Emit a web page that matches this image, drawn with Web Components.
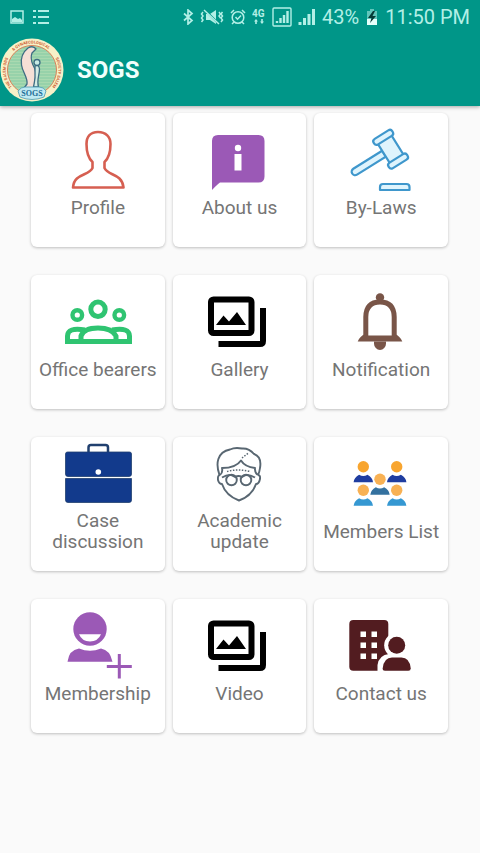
<!DOCTYPE html>
<html lang="en">
<head>
<meta charset="utf-8">
<meta name="viewport" content="width=device-width, initial-scale=1">
<title>SOGS</title>
<style>
  html { min-height: 100%; background: #fafafa; }
  body { margin: 0; font-family: Roboto, "Noto Sans", sans-serif; color: #757575; }
</style>
</head>
<body>
<sogs-app></sogs-app>

<template id="status-bar">
  <style>
    :host { display: flex; justify-content: space-between; align-items: center; height: 34px; padding: 0 10px; color: #b2efe6; font-size: 20px; line-height: 34px; }
    div { display: flex; align-items: center; gap: 6px; }
    .left { gap: 9px; }
    svg { display: block; fill: none; stroke: currentColor; stroke-width: 2; }
    .f { fill: currentColor; stroke: none; }
  </style>
  <div class="left">
    <svg width="14" height="14" viewBox="0 0 14 14"><rect x="1" y="1" width="12" height="12" stroke-width="1.5"/><path class="f" d="M2 12V9l3-2 3 2 2-1 2 2v2z"/></svg>
    <svg width="16" height="16" viewBox="0 0 16 16"><path d="M0 2h3M0 8h3M0 14h3M5 2h11M5 8h11M5 14h11"/></svg>
  </div>
  <div>
    <svg width="12" height="16" viewBox="0 0 12 16"><path stroke-width="1.7" d="M2 4.500l8 7-4 3.500V1l4 3.500-8 7"/></svg>
    <svg width="24" height="16" viewBox="0 0 24 16"><path class="f" d="M6 5h4l6-4v14l-6-4H6z"/><path stroke="#009688" d="M5 1l14 14"/><path stroke-width="1.500" d="M4 1l15 14M3 3L1.500 5 3 7 1.500 9 3 11l-1.500 2M19 3l1.500 2L19 7l1.500 2M22.500 3L21 5l1.500 2L21 9l1.500 2-1.500 2"/></svg>
    <svg width="16" height="16" viewBox="0 0 16 16"><circle cx="8" cy="8.500" r="5.800" stroke-width="1.500"/><path stroke-width="1.500" d="M5.500 8l2 2.200L11 6.500M1 4l3-3M15 4l-3-3M4 13l-2 2M12 13l2 2"/></svg>
    <svg width="14" height="16" viewBox="0 0 14 16"><text class="f" x="0" y="8" font-size="10" font-weight="700">4G</text><path class="f" d="M2 12.500L4 10l2 2.500H4.800V15H3.200v-2.500zM8 12.500h1.200V10h1.600v2.500H12L10 15z"/></svg>
    <svg width="20" height="20" viewBox="0 0 20 20"><rect x="1" y="1" width="18" height="18" rx="1" stroke-width="1.400"/><path stroke-width="2.400" d="M5 16v-2M8.500 16v-5M12 16V8M15.500 16V4"/></svg>
    <svg width="18" height="16" viewBox="0 0 18 16"><path stroke-width="3" d="M2 16v-3M6.500 16v-7M11 16V5M15.500 16V0"/></svg>
    <span>43%</span>
    <svg width="14" height="16" viewBox="0 0 14 16"><path class="f" fill-opacity=".55" d="M5 0h4v2h3v14H2V2h3z"/><path class="f" style="fill:#e4fffb" d="M2 10h10v6H2z"/><path style="fill:#063b36;stroke:none" d="M8 2L3 9h3.500L5 14l6-7H7.500L10 2z"/></svg>
    <span>11:50 PM</span>
  </div>
</template>

<template id="sogs-logo">
  <style>
    :host { display: block; width: 64px; height: 64px; }
    svg { display: block; }
  </style>
  <svg width="64" height="64" viewBox="0 0 64 64" role="img" aria-label="SOGS emblem">
    <defs>
      <path id="ring-left" d="M12 49A26.500 26.500 0 0 1 8.500 20"/>
      <path id="ring-top" d="M13.500 13A26.500 26.500 0 0 1 50.500 13"/>
      <path id="ring-right" d="M55.500 20A26.500 26.500 0 0 1 52 49"/>
      <pattern id="lines" width="3" height="3" patternUnits="userSpaceOnUse"><rect width="3" height="3" fill="#a9d9b0"/><path d="M0 1h3" stroke="#86cba4" stroke-width="1"/></pattern>
    </defs>
    <circle cx="32" cy="32" r="31.500" fill="#f6f1c8"/>
    <circle cx="32" cy="32" r="24.500" fill="url(#lines)" stroke="#d9825a" stroke-width="1"/>
    <g font-size="4" font-weight="700" fill="#cf5a32">
      <text><textPath href="#ring-left">THE SALEM OBS</textPath></text>
      <text><textPath href="#ring-top">&amp; GYNAECOLOGICAL</textPath></text>
      <text><textPath href="#ring-right">SOCIETY SALEM</textPath></text>
    </g>
    <g stroke="#3d6c82" stroke-width="1.300" stroke-linejoin="round">
      <path fill="#f6dfd6" d="M36 11q-3-4-8-1c-5 4-7.500 10-6.500 17 1 7 6.500 13 5.500 19l-3 4h12q-2-3-1-8c2-6 1-10-2-15q-3-7-1-12 3-3 4-4z"/>
      <path fill="#d6ece4" d="M35 28q4-2 4.500 3c0 6-3 11-1 18h-5q1-5 1.500-9z"/>
      <circle cx="37" cy="24.500" r="3" fill="#c9ebe4"/>
    </g>
    <path d="M18 53q3-4 7-4h14q5 0 7 4l-2 6q-12 5-24 0z" fill="#bfe9f2" stroke="#4a9bb0" stroke-width=".8"/>
    <text x="32" y="58" text-anchor="middle" font-size="8" font-weight="700" font-family="Liberation Serif, serif" fill="#1b6c96">SOGS</text>
  </svg>
</template>

<template id="app-bar">
  <style>
    :host { display: flex; align-items: center; gap: 13px; min-height: 72px; color: #f0fffc; }
    h1 { margin: 0; font-size: 24px; line-height: 32px; font-weight: 700; }
  </style>
  <sogs-logo></sogs-logo>
  <h1><slot></slot></h1>
</template>

<template id="menu-tile">
  <style>
    :host { display: block; }
    button { display: flex; flex-direction: column; align-items: center; box-sizing: border-box; width: 100%; min-height: 134px; margin: 0; padding: 0 4px 19px; border: 0; border-radius: 6px; background: #fff; box-shadow: 0 1px 3px rgba(0,0,0,.24); color: inherit; font: inherit; font-size: 19px; line-height: 21px; cursor: pointer; }
    .icon { display: block; width: 100px; height: 73px; }
    .label { display: flex; align-items: center; justify-content: center; min-height: 42px; text-align: center; }
  </style>
  <button type="button"><span class="icon"></span><span class="label"><span><slot></slot></span></span></button>
</template>

<template id="sogs-app">
  <style>
    :host { display: block; }
    header { position: relative; background: #009688; box-shadow: 0 1px 4px rgba(0,0,0,.35); }
    main { display: grid; grid-template-columns: repeat(3, minmax(0, 1fr)); gap: 28px 8px; padding: 7px 32px 32px 31px; }
  </style>
  <header><status-bar></status-bar><app-bar>SOGS</app-bar></header>
  <main>
    <menu-tile icon="profile">Profile</menu-tile>
    <menu-tile icon="about">About us</menu-tile>
    <menu-tile icon="laws">By-Laws</menu-tile>
    <menu-tile icon="office">Office bearers</menu-tile>
    <menu-tile icon="gallery">Gallery</menu-tile>
    <menu-tile icon="bell">Notification</menu-tile>
    <menu-tile icon="case">Case discussion</menu-tile>
    <menu-tile icon="academic">Academic update</menu-tile>
    <menu-tile icon="members">Members List</menu-tile>
    <menu-tile icon="membership">Membership</menu-tile>
    <menu-tile icon="gallery">Video</menu-tile>
    <menu-tile icon="contact">Contact us</menu-tile>
  </main>
</template>

<script>
  const icons = {
    profile: `<path fill="none" stroke="#d65f51" stroke-width="2.600" stroke-linejoin="round" d="M50 19C42 19 38.500 24 38.500 31C38.500 40 40 45 44.500 49V55C41 63 26 60 25 74.500H75.500C74 60 60 63 56.500 55V49C61 45 62.500 40 62.500 31C62.500 24 58 19 50 19Z"/>`,
    about: `<path fill="#9b59b6" d="M23 77V28q0-6 6-6h40.500q6 0 6 6v35.500q0 6-6 6H31q-3 2-8 7.500z"/><circle cx="49" cy="35" r="3.200" fill="#fff"/><path fill="#fff" d="M45.500 41h7v16.500h-7z"/>`,
    laws: `<g fill="#dff4fd" stroke="#3f97cc" stroke-width="2.200"><g transform="translate(59.500 36) rotate(-32)"><path d="M-8-3H-42a3.500 3.500 0 0 0 0 7H-8z"/><rect x="-8" y="-12" width="16" height="24"/><rect x="-11" y="-17" width="22" height="6.500" rx="3"/><rect x="-11" y="11" width="22" height="6.500" rx="3"/></g><path stroke-linejoin="round" d="M49 77v-3q0-3 3-3h23.500q3 0 3 3v3z"/></g>`,
    office: `<g fill="none" stroke="#2fc471" stroke-width="5"><circle cx="50" cy="34.300" r="7.200"/><circle cx="29.300" cy="40" r="4.800" stroke-width="4.400"/><circle cx="71.300" cy="40" r="4.800" stroke-width="4.400"/><path d="M33 66.500V61Q36 53 50 53T68 61V66.500Z"/><path d="M37 55Q19.500 52 19.500 61V66.500H81.500V61Q81.500 52 64 55"/></g>`,
    gallery: `<g fill="none" stroke="#000" stroke-width="6"><rect x="22" y="24.500" width="40.500" height="33.500" rx="2.500"/><path d="M29.500 69H71q3 0 3-3V33"/></g><path d="M27 50l7.500-9.500 5.500 6L48 37l9 13z"/>`,
    bell: `<g fill="#795548"><circle cx="49" cy="22.500" r="4.200"/><path fill="none" stroke="#795548" stroke-width="5" d="M34.800 63V42Q35 27 49 27T63.200 42V63"/><path d="M26.700 66.500Q29 61 34 59l3 1.500h24l3-1.500q5 2 7.300 7.500z"/><path d="M43 66.500h12v2a6 6.500 0 0 1-12 0z"/></g>`,
    case: `<path fill="none" stroke="#21406f" stroke-width="2.500" d="M40.500 15V10.500q0-2.500 2.500-2.500h14.500q2.500 0 2.500 2.500V15"/><g fill="#123a8c" stroke="#21406f" stroke-width=".8"><path d="M19.500 15h62q2 0 2 2v20q0 2.500-2.500 2.500H20q-2.500 0-2.500-2.500V17q0-2 2-2z"/><path d="M17.500 41.500h66V63q0 2.500-2.500 2.500H20q-2.500 0-2.500-2.500z"/></g><circle cx="50.300" cy="35" r="2.800" fill="#fff"/>`,
    academic: `<g fill="none" stroke="#596772" stroke-width="1.900" stroke-linejoin="round"><path d="M30.500 38C26.500 27 28 15 41 12.500Q46 10 53 11.500Q60 11 65 17Q73 20 71 31Q70.500 35 69 38"/><path d="M31 38Q28.500 38 29 43Q30 47 33 47C36 56 42 60.500 50 63.500C58 60.500 64 56 67 47Q70 47 71 42Q71.500 38 69 38M31 38Q34 36 33 31Q47 31 52 23.500Q56 30 66 31Q65.500 36 69 38"/><circle cx="42.500" cy="43" r="5.300"/><circle cx="57" cy="43" r="5.300"/><path d="M33 40.500q5-3 9-2.500l4 2q3.500-2 7 0l4-2q5 0 9 2.500"/><path stroke-dasharray="1.500 1.500" stroke-width="1.500" d="M38 34.500Q49 31.500 61 34.500M53 21L60 15.500"/></g>`,
    members: `${[[32.3,29.7,'#1f3da0','#f8a52f'],[65.7,29.7,'#1f3da0','#f8a52f'],[32.3,53.3,'#3598d2','#f8b154'],[65.7,53.3,'#3598d2','#f8b154'],[49,42.3,'#34719f','#f8b154']].map(([x,y,b,h]) => `<circle cx="${x}" cy="${y}" r="5.700" fill="${h}"/><path fill="${b}" d="M${x-9.7} ${y+15.5}q.5-5 5.500-7.500 4.200 2.500 8.400 0 5 2.500 5.500 7.500z"/>`).join('')}`,
    membership: `<g fill="#9b59b6"><circle cx="42" cy="30" r="16.700"/><path d="M19.500 62.700Q21 51 31 49.500q11 4.500 22 0Q62 51 64.500 62.700z"/></g><path fill="#fff" d="M31 35.300H53Q50 42.500 42 42.500T31 35.300z"/><path stroke="#9b59b6" stroke-width="3" d="M58.800 67.500h25M71.300 55v24.500"/>`,
    contact: `<rect x="18.300" y="21" width="39" height="50.700" rx="4" fill="#521c20"/><path fill="#fff" d="M29.500 32.500h5.500v5.500h-5.500zm11 0H46v5.500h-5.500zm-11 11h5.500V49h-5.500zm11 0H46V49h-5.500zm-11 11h5.500V60h-5.500zm11 0H46V60h-5.500z"/><circle cx="65.700" cy="46.300" r="12.500" fill="#fff"/><path fill="#fff" d="M46.500 73V66Q48 56 58 55h16l9 18z"/><circle cx="65.700" cy="46.300" r="8.500" fill="#521c20"/><path fill="#521c20" d="M54 71.700q-2.500 0-2.300-2.500Q53 58.500 61 58.500h9.500q8 0 9.200 10.700 0 2.500-2.300 2.500z"/>`
  };

  class TemplateElement extends HTMLElement {
    constructor() {
      super();
      this.attachShadow({ mode: "open" })
        .append(document.getElementById(this.localName).content.cloneNode(true));
    }
  }

  class MenuTile extends TemplateElement {
    connectedCallback() {
      this.shadowRoot.querySelector(".icon").innerHTML =
        `<svg width="100" height="73" viewBox="0 0 100 73" style="display:block;overflow:visible" aria-hidden="true">${icons[this.getAttribute("icon")]}</svg>`;
    }
  }

  customElements.define("status-bar", class extends TemplateElement {});
  customElements.define("sogs-logo", class extends TemplateElement {});
  customElements.define("app-bar", class extends TemplateElement {});
  customElements.define("menu-tile", MenuTile);
  customElements.define("sogs-app", class extends TemplateElement {});
</script>
</body>
</html>
